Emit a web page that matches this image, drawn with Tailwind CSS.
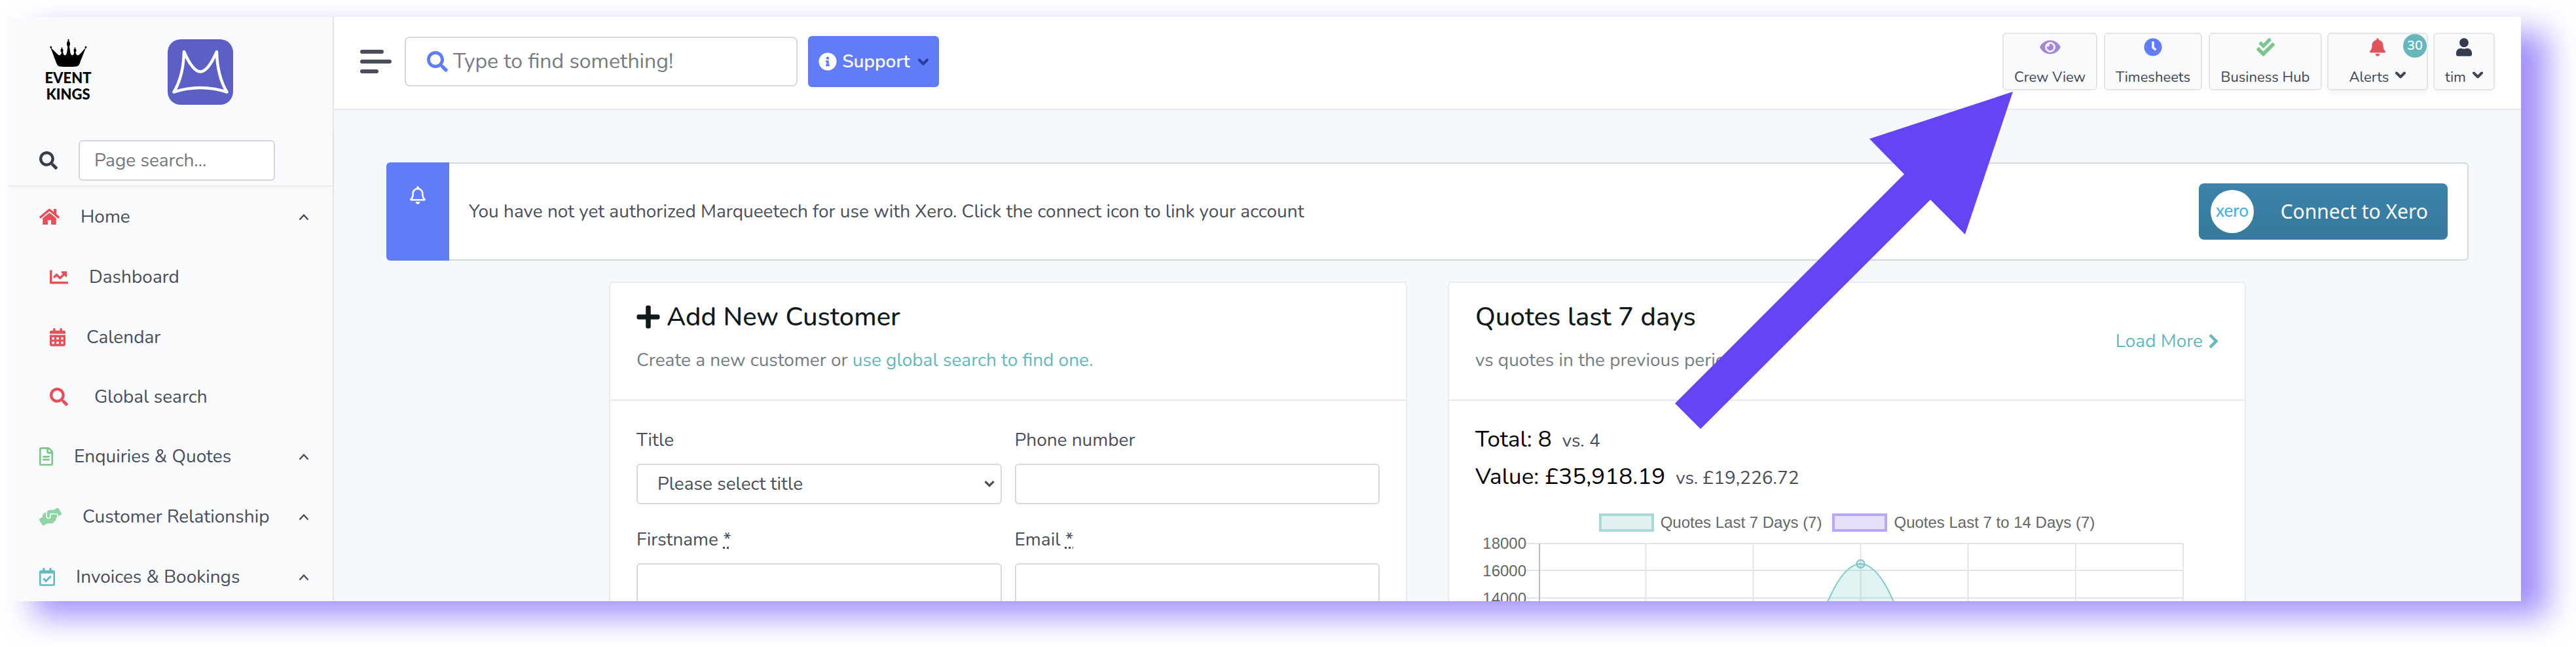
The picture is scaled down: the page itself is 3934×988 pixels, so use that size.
<!DOCTYPE html>
<html lang="en">
<head>
    <meta charset="UTF-8">
    <meta name="viewport" content="width=device-width, initial-scale=1.0">
    <title>Marqueetech - Dashboard</title>
    <script src="https://cdn.jsdelivr.net/npm/@tailwindcss/browser@4"></script>
</head>
<body class="h-screen overflow-hidden bg-white pt-[26px] pr-[84px] pb-[70px] pl-3 font-['Nunito','Lato',sans-serif] text-[28px] leading-10 text-[#4a4f5a]">

    <!-- Icon sprite -->
    <svg class="hidden">
        <symbol id="search" viewBox="0 0 512 512"><path d="M505 442.7L405.3 343c-4.5-4.5-10.6-7-17-7H372c27.6-35.3 44-79.7 44-128C416 93.1 322.9 0 208 0S0 93.1 0 208s93.1 208 208 208c48.3 0 92.7-16.4 128-44v16.3c0 6.4 2.5 12.5 7 17l99.7 99.7c9.4 9.4 24.6 9.4 33.9 0l28.3-28.3c9.4-9.4 9.4-24.6.1-34zM208 336c-70.7 0-128-57.2-128-128 0-70.7 57.2-128 128-128 70.7 0 128 57.2 128 128 0 70.7-57.2 128-128 128z"/></symbol>
        <symbol id="home" viewBox="0 0 576 512"><path d="M280.37 148.26L96 300.11V464a16 16 0 0 0 16 16l112.06-.29a16 16 0 0 0 15.92-16V368a16 16 0 0 1 16-16h64a16 16 0 0 1 16 16v95.64a16 16 0 0 0 16 16.05L464 480a16 16 0 0 0 16-16V300L295.67 148.26a12.19 12.19 0 0 0-15.3 0zM571.6 251.47L488 182.56V44.05a12 12 0 0 0-12-12h-56a12 12 0 0 0-12 12v72.61L318.47 43a48 48 0 0 0-61 0L4.34 251.47a12 12 0 0 0-1.6 16.9l25.5 31A12 12 0 0 0 45.15 301l235.22-193.74a12.19 12.19 0 0 1 15.3 0L530.9 301a12 12 0 0 0 16.9-1.6l25.5-31a12 12 0 0 0-1.7-16.93z"/></symbol>
        <symbol id="chart" viewBox="0 0 512 512"><path d="M496 384H64V80c0-8.84-7.16-16-16-16H16C7.16 64 0 71.16 0 80v336c0 17.67 14.33 32 32 32h464c8.84 0 16-7.16 16-16v-32c0-8.84-7.16-16-16-16zM464 96H345.94c-21.38 0-32.09 25.85-16.97 40.97l32.4 32.4L288 242.75l-73.37-73.37c-12.5-12.5-32.76-12.5-45.25 0l-68.69 68.69c-6.25 6.25-6.25 16.38 0 22.63l22.62 22.62c6.25 6.25 16.38 6.25 22.63 0L192 237.25l73.37 73.37c12.5 12.5 32.76 12.5 45.25 0l96-96 32.4 32.4c15.12 15.12 40.97 4.41 40.97-16.97V112c.01-8.84-7.15-16-15.99-16z"/></symbol>
        <symbol id="calendar" viewBox="0 0 448 512"><path fill-rule="evenodd" d="M0 464c0 26.500 21.500 48 48 48h352c26.500 0 48-21.500 48-48V192H0zM64 256h64v64H64zm128 0h64v64h-64zm128 0h64v64h-64zM64 384h64v64H64zm128 0h64v64h-64zm128 0h64v64h-64z"/><path d="M400 64h-48V16c0-8.800-7.200-16-16-16h-32c-8.800 0-16 7.200-16 16v48H160V16c0-8.800-7.200-16-16-16h-32c-8.800 0-16 7.200-16 16v48H48C21.500 64 0 85.500 0 112v48h448v-48c0-26.500-21.500-48-48-48z"/></symbol>
        <symbol id="file" viewBox="0 0 384 512"><path d="M288 248v28c0 6.600-5.400 12-12 12H108c-6.600 0-12-5.400-12-12v-28c0-6.600 5.400-12 12-12h168c6.600 0 12 5.400 12 12zm-12 72H108c-6.600 0-12 5.400-12 12v28c0 6.600 5.400 12 12 12h168c6.600 0 12-5.400 12-12v-28c0-6.600-5.400-12-12-12zm108-188.100V464c0 26.500-21.500 48-48 48H48c-26.500 0-48-21.500-48-48V48C0 21.500 21.500 0 48 0h204.100C264.800 0 277 5.100 286 14.100L369.900 98c9 8.900 14.100 21.200 14.100 33.900zm-128-80V128h76.100L256 51.900zM336 464V176H232c-13.300 0-24-10.700-24-24V48H48v416h288z"/></symbol>
        <symbol id="hands" viewBox="0 0 640 512"><path d="M488 192H336v56c0 39.700-32.300 72-72 72s-72-32.300-72-72V126.400l-64.900 39C107.800 176.900 96 197.800 96 220.200v47.300l-80 46.200C.7 322.500-4.600 342.100 4.300 357.400l80 138.600c8.800 15.300 28.400 20.500 43.700 11.700L231.400 448H368c35.300 0 64-28.700 64-64h16c17.700 0 32-14.300 32-32v-64h8c13.300 0 24-10.700 24-24v-48c0-13.300-10.700-24-24-24zm147.700-37.400L555.700 16C546.900.7 527.300-4.500 512 4.300L408.600 64H306.400c-12 0-23.700 3.400-33.900 9.700L239 94.600c-9.400 5.800-15 16.100-15 27.100V248c0 22.100 17.900 40 40 40s40-17.900 40-40v-88h184c30.900 0 56 25.100 56 56v28.500l80-46.200c15.300-8.900 20.500-28.400 11.700-43.700z"/></symbol>
        <symbol id="calendar-check" viewBox="0 0 448 512"><path d="M400 64h-48V12c0-6.627-5.373-12-12-12h-40c-6.627 0-12 5.373-12 12v52H160V12c0-6.627-5.373-12-12-12h-40c-6.627 0-12 5.373-12 12v52H48C21.490 64 0 85.490 0 112v352c0 26.510 21.490 48 48 48h352c26.510 0 48-21.490 48-48V112c0-26.510-21.490-48-48-48zm-6 400H54a6 6 0 0 1-6-6V160h352v298a6 6 0 0 1-6 6zm-52.849-200.650L198.842 404.519c-4.705 4.667-12.303 4.637-16.971-.068l-75.091-75.699c-4.667-4.705-4.637-12.303.068-16.971l22.719-22.536c4.705-4.667 12.303-4.637 16.970.069l44.104 44.461 111.072-110.181c4.705-4.667 12.303-4.637 16.971.068l22.536 22.718c4.667 4.705 4.636 12.303-.069 16.970z"/></symbol>
        <symbol id="info" viewBox="0 0 512 512"><path d="M256 8C119.043 8 8 119.083 8 256c0 136.997 111.043 248 248 248s248-111.003 248-248C504 119.083 392.957 8 256 8zm0 110c23.196 0 42 18.804 42 42s-18.804 42-42 42-42-18.804-42-42 18.804-42 42-42zm56 254c0 6.627-5.373 12-12 12h-88c-6.627 0-12-5.373-12-12v-24c0-6.627 5.373-12 12-12h12v-64h-12c-6.627 0-12-5.373-12-12v-24c0-6.627 5.373-12 12-12h64c6.627 0 12 5.373 12 12v100h12c6.627 0 12 5.373 12 12v24z"/></symbol>
        <symbol id="eye" viewBox="0 0 576 512"><path d="M572.52 241.4C518.29 135.59 410.93 64 288 64S57.68 135.64 3.480 241.410a32.350 32.350 0 0 0 0 29.190C57.710 376.410 165.070 448 288 448s230.320-71.640 284.520-177.410a32.350 32.350 0 0 0 0-29.190zM288 400a144 144 0 1 1 144-144 143.930 143.930 0 0 1-144 144zm0-240a95.310 95.310 0 0 0-25.310 3.790 47.850 47.850 0 0 1-66.900 66.900A95.780 95.780 0 1 0 288 160z"/></symbol>
        <symbol id="clock" viewBox="0 0 512 512"><path d="M256 8C119 8 8 119 8 256s111 248 248 248 248-111 248-248S393 8 256 8zm92.490 313l-20 25a16 16 0 0 1-22.490 2.500l-67-49.720a40 40 0 0 1-15-31.230V112a16 16 0 0 1 16-16h32a16 16 0 0 1 16 16v144l58 42.500a16 16 0 0 1 2.490 22.500z"/></symbol>
        <symbol id="check-double" viewBox="0 0 512 512"><path d="M505 174.800l-39.600-39.600c-9.400-9.400-24.600-9.400-33.900 0L192 374.700 80.600 263.200c-9.400-9.400-24.600-9.400-33.900 0L7 302.900c-9.400 9.400-9.400 24.600 0 34L175 505c9.400 9.400 24.600 9.400 33.900 0l296-296.200c9.400-9.500 9.400-24.700.1-34zm-324.300 106c6.200 6.300 16.400 6.300 22.600 0l208-208.200c6.200-6.300 6.200-16.400 0-22.600L366.100 4.700c-6.200-6.300-16.400-6.300-22.600 0L192 156.200l-55.400-55.500c-6.200-6.300-16.400-6.300-22.600 0L68.700 146c-6.200 6.300-6.200 16.400 0 22.600l112 112.200z"/></symbol>
        <symbol id="bell" viewBox="0 0 448 512"><path d="M224 512c35.320 0 63.970-28.650 63.970-64H160.030c0 35.350 28.650 64 63.970 64zm215.390-149.710c-19.320-20.760-55.470-51.990-55.470-154.290 0-77.700-54.480-139.900-127.940-155.160V32c0-17.670-14.320-32-31.980-32s-31.980 14.330-31.980 32v20.840C118.560 68.100 64.080 130.300 64.080 208c0 102.300-36.150 133.530-55.470 154.290-6 6.450-8.660 14.160-8.610 21.710.11 16.400 12.980 32 32.100 32h383.800c19.120 0 32-15.600 32.100-32 .05-7.550-2.610-15.270-8.610-21.710z"/></symbol>
        <symbol id="bell-outline" viewBox="0 0 448 512"><path d="M439.390 362.290c-19.320-20.760-55.470-51.990-55.470-154.290 0-77.700-54.480-139.900-127.940-155.160V32c0-17.670-14.320-32-31.980-32s-31.980 14.330-31.980 32v20.840C118.560 68.100 64.080 130.300 64.080 208c0 102.300-36.150 133.530-55.470 154.290-6 6.450-8.660 14.160-8.610 21.710.11 16.400 12.980 32 32.100 32h383.800c19.120 0 32-15.600 32.100-32 .05-7.550-2.610-15.270-8.610-21.710zM67.530 368c21.220-27.970 44.420-74.330 44.530-159.420 0-.2-.06-.38-.06-.58 0-61.860 50.140-112 112-112s112 50.140 112 112c0 .2-.06.38-.06.58.11 85.100 23.310 131.460 44.530 159.420H67.530zM224 512c35.320 0 63.970-28.650 63.970-64H160.030c0 35.350 28.650 64 63.970 64z"/></symbol>
        <symbol id="user" viewBox="0 0 448 512"><path d="M224 256c70.700 0 128-57.300 128-128S294.700 0 224 0 96 57.300 96 128s57.300 128 128 128zm89.600 32h-16.700c-22.200 10.200-46.900 16-72.900 16s-50.600-5.800-72.900-16h-16.700C60.200 288 0 348.200 0 422.400V464c0 26.500 21.500 48 48 48h352c26.500 0 48-21.500 48-48v-41.600c0-74.200-60.200-134.400-134.400-134.400z"/></symbol>
        <symbol id="plus" viewBox="0 0 448 512"><path d="M416 208H272V64c0-17.670-14.330-32-32-32h-32c-17.670 0-32 14.330-32 32v144H32c-17.670 0-32 14.330-32 32v32c0 17.670 14.330 32 32 32h144v144c0 17.670 14.330 32 32 32h32c17.670 0 32-14.330 32-32V304h144c17.670 0 32-14.330 32-32v-32c0-17.670-14.330-32-32-32z"/></symbol>
        <symbol id="up" viewBox="0 0 16 11"><path d="M1.500 9.500L8 2.500l6.500 7" fill="none" stroke="currentColor" stroke-width="2.500"/></symbol>
        <symbol id="down" viewBox="0 0 16 11"><path d="M2 2.500l6 6 6-6" fill="none" stroke="currentColor" stroke-width="4" stroke-linecap="round" stroke-linejoin="round"/></symbol>
    </svg>

    <div class="flex h-full overflow-hidden bg-[#f5f9fc] shadow-[40px_23px_45px_rgba(102,68,245,0.6)]">

        <!-- Sidebar -->
        <aside class="w-[498px] shrink-0 border-r-2 border-[#e1e5e8] bg-[#f8fafb]">
            <div class="flex h-[172px] items-start gap-[116px] border-b border-[#f3f5f6] pt-[34px] pl-14">
                <a href="#" class="flex w-[72px] flex-col items-center text-black">
                    <svg class="h-[42px] w-[57px]" viewBox="0 0 57 42" fill="currentColor">
                        <path d="M1 12l10 10c3 3.500 5 3 6.500 0l1-3h1.500l1 4c2 2.500 4 1.500 5-2l1.500-10h2.500l1.500 10c1 3.500 3 4.500 5 2l1-4h1.500l1 3c1.500 3 3.500 3.500 6.500 0l9-10-8 20c-2 6-3 9-7 9.500-8 1-17 1-25 0-4-.5-5-4-7-9.500z"/>
                        <ellipse cx="28.500" cy="7" rx="2.500" ry="4"/><path d="M27.500 0h2v14h-2z"/>
                        <ellipse cx="18.500" cy="17" rx="2" ry="3"/><ellipse cx="38.500" cy="17" rx="2" ry="3"/>
                        <path d="M18 12h1v10h-1zM38 12h1v10h-1z"/>
                        <circle cx="1.800" cy="12" r="1.500"/><circle cx="55" cy="12" r="1.500"/>
                    </svg>
                    <span class="mt-1 text-center font-['Lato'] text-[22px] leading-[25px] font-black">EVENT<br>KINGS</span>
                </a>
                <a href="#" aria-label="Marqueetech">
                    <svg class="size-[100px]" viewBox="0 0 100 100">
                        <rect width="100" height="100" rx="20" fill="#5c60c5"/>
                        <path d="M25 19C33 37 42 49.500 50 49.500S67 37 75 19C75.500 44 80 63 90.500 80.500 64 72 36 72 9.500 80.500 20 63 24.500 44 25 19z" fill="none" stroke="#fff" stroke-width="4.500" stroke-linejoin="round"/>
                    </svg>
                </a>
            </div>
            <div class="flex h-[87px] items-center gap-8 border-b-2 border-[#eceff0] pt-2 pl-12 shadow-[0_2px_4px_rgba(0,0,0,0.03)]">
                <svg class="size-7 fill-[#343c4d]"><use href="#search"/></svg>
                <input type="text" aria-label="Page search" placeholder="Page search..." class="h-[62px] w-[300px] rounded-md border-2 border-[#d3d6db] bg-white px-[22px] placeholder:text-[#72787d]">
            </div>
            <nav class="text-[#4a4e5c]">
                <button class="flex h-[92px] w-full items-center gap-8 pr-9 pl-12 text-left">
                    <svg class="h-7 w-[31px] fill-[#e3515a]"><use href="#home"/></svg>
                    <span class="flex-1">Home</span>
                    <svg class="h-[11px] w-4"><use href="#up"/></svg>
                </button>
                <a href="#" class="flex h-[92px] items-center gap-8 pl-16">
                    <svg class="size-7 fill-[#e3515a]"><use href="#chart"/></svg>Dashboard
                </a>
                <a href="#" class="flex h-[92px] items-center gap-8 pl-16">
                    <svg class="h-7 w-6 fill-[#e3515a]"><use href="#calendar"/></svg>Calendar
                </a>
                <a href="#" class="flex h-[90px] items-center gap-10 pl-16">
                    <svg class="size-7 fill-[#e3515a]"><use href="#search"/></svg>Global search
                </a>
                <button class="flex h-[92px] w-full items-center gap-8 pr-9 pl-12 text-left">
                    <svg class="h-7 w-[21px] fill-[#7cc58b]"><use href="#file"/></svg>
                    <span class="flex-1">Enquiries &amp; Quotes</span>
                    <svg class="h-[11px] w-4"><use href="#up"/></svg>
                </button>
                <button class="flex h-[92px] w-full items-center gap-8 pr-9 pl-12 text-left">
                    <svg class="h-7 w-[34px] fill-[#8ed4a5]"><use href="#hands"/></svg>
                    <span class="flex-1">Customer Relationship</span>
                    <svg class="h-[11px] w-4"><use href="#up"/></svg>
                </button>
                <button class="flex h-[92px] w-full items-center gap-8 pr-9 pl-12 text-left">
                    <svg class="h-7 w-6 fill-[#66b9c4]"><use href="#calendar-check"/></svg>
                    <span class="flex-1">Invoices &amp; Bookings</span>
                    <svg class="h-[11px] w-4"><use href="#up"/></svg>
                </button>
            </nav>
        </aside>

        <div class="min-w-0 flex-1">
            <!-- Top bar -->
            <header class="flex h-[142px] items-center border-b-2 border-[#e5e9ef] bg-white pr-10 pb-1 pl-10">
                <button aria-label="Toggle menu" class="mr-5 flex w-12 flex-col gap-[9px]">
                    <span class="h-1.5 w-9 rounded-sm bg-[#4a4e5a]"></span>
                    <span class="h-1.5 w-12 rounded-sm bg-[#4a4e5a]"></span>
                    <span class="h-1.5 w-7 rounded-sm bg-[#4a4e5a]"></span>
                </button>
                <label class="mr-4 flex h-[76px] w-[600px] items-center gap-2 rounded-lg border-2 border-[#d6d8da] px-8">
                    <svg class="size-8 shrink-0 fill-[#607cf6]"><use href="#search"/></svg>
                    <input type="text" aria-label="Search" placeholder="Type to find something!" class="w-full text-[32px] outline-none placeholder:text-[#767c80]">
                </label>
                <button class="flex h-[78px] w-[200px] items-center justify-center gap-2 rounded-md bg-[#607cf6] font-semibold text-white">
                    <svg class="size-7 fill-white"><use href="#info"/></svg>Support
                    <svg class="ml-1 h-[11px] w-4 text-[#2b3d9c]"><use href="#down"/></svg>
                </button>

                <div class="ml-auto flex gap-2 text-[22px] leading-9 text-[#414656]">
                    <div class="relative">
                        <a href="#" class="flex h-[88px] w-[145px] flex-col items-center justify-between rounded-md border-2 border-[#e3e6e9] bg-[#f8fafb] pt-1.5">
                            <svg class="h-7 w-8 fill-[#a587d8]"><use href="#eye"/></svg>Crew View
                        </a>
                        <!-- Arrow pointing at Crew View -->
                        <svg class="pointer-events-none absolute top-[90px] right-[129px] z-10 h-[515px] w-[516px] fill-[#6644f3]" viewBox="0 0 516 515">
                            <path d="M516 0L443 218 390 165 39 515 0 476 350 126 297 72z"/>
                        </svg>
                    </div>
                    <a href="#" class="ml-0.5 flex h-[88px] w-[150px] flex-col items-center justify-between rounded-md border-2 border-[#e3e6e9] bg-[#f8fafb] pt-1.5">
                        <svg class="size-7 fill-[#607cf6]"><use href="#clock"/></svg>Timesheets
                    </a>
                    <a href="#" class="ml-0.5 flex h-[88px] w-[173px] flex-col items-center justify-between rounded-md border-2 border-[#e3e6e9] bg-[#f8fafb] pt-1.5">
                        <svg class="size-7 fill-[#7cc58b]"><use href="#check-double"/></svg>Business Hub
                    </a>
                    <button class="relative flex h-[88px] w-[154px] flex-col items-center justify-between rounded-md border-2 border-[#e3e6e9] bg-[#f8fafb] pt-1.5 shadow-[0_4px_8px_rgba(0,0,0,0.05)]">
                        <svg class="h-7 w-6 fill-[#e3515a]"><use href="#bell"/></svg>
                        <span class="flex items-center gap-2.5">Alerts <svg class="mb-2 h-[11px] w-4"><use href="#down"/></svg></span>
                        <span class="absolute top-0 right-0 flex size-9 items-center justify-center rounded-full bg-[#66b7bb] text-xl font-semibold text-white">30</span>
                    </button>
                    <button class="flex h-[88px] w-[94px] flex-col items-center justify-between rounded-md border-2 border-[#e3e6e9] bg-[#f8fafb] pt-1.5 shadow-[0_4px_8px_rgba(0,0,0,0.03)]">
                        <svg class="h-7 w-6 fill-[#343c4d]"><use href="#user"/></svg>
                        <span class="flex items-center gap-2.5">tim <svg class="mb-2 h-[11px] w-4"><use href="#down"/></svg></span>
                    </button>
                </div>
            </header>

            <main class="px-20 pt-20">
                <!-- Xero notice -->
                <div class="flex h-[150px]">
                    <div class="flex w-24 shrink-0 justify-center rounded-l-md bg-[#607cf6] pt-9">
                        <svg class="h-7 w-6 fill-white"><use href="#bell-outline"/></svg>
                    </div>
                    <div class="flex flex-1 items-center justify-between rounded-r-md border-2 border-l-0 border-[#d3d8db] bg-white pr-[30px] pl-[30px]">
                        <p>You have not yet authorized Marqueetech for use with Xero. Click the connect icon to link your account</p>
                        <a href="#" class="flex h-[86px] w-[380px] items-center justify-between rounded-lg bg-linear-to-b from-[#3c82a9] to-[#37799c] pr-[30px] pl-[18px] font-['Noto_Sans'] text-[30px] text-white">
                            <span class="flex size-[66px] items-center justify-center rounded-full bg-white pb-1 font-['Lato'] text-[26px] text-[#3fafe4]">xero</span>
                            Connect to Xero
                        </a>
                    </div>
                </div>

                <div class="mx-auto mt-8 grid max-w-[2500px] grid-cols-2 gap-[62px]">
                    <!-- New customer form -->
                    <section class="rounded-md border-2 border-[#e8ecf0] bg-white">
                        <div class="border-b-2 border-[#e8e8f2] px-10 pt-7 pb-10">
                            <h2 class="flex items-center gap-2.5 text-[40px] leading-[48px] font-medium text-[#12191b]">
                                <svg class="h-10 w-9 fill-[#12191b]"><use href="#plus"/></svg>Add New Customer
                            </h2>
                            <p class="mt-[22px] text-[#777d82]">Create a new customer or <a href="#" class="text-[#66b7bb]">use global search to find one.</a></p>
                        </div>
                        <form class="grid grid-cols-2 gap-x-5 gap-y-[34px] px-10 pt-10">
                            <div>
                                <label for="title">Title</label>
                                <div class="relative mt-4">
                                    <select id="title" class="h-[62px] w-full appearance-none rounded-md border-2 border-[#d6d8da] bg-white px-[30px]">
                                        <option>Please select title</option>
                                    </select>
                                    <svg class="pointer-events-none absolute top-[25px] right-2.5 h-3 w-[18px]" viewBox="0 0 16 11"><path d="M2 2l6 6 6-6" fill="none" stroke="currentColor" stroke-width="3"/></svg>
                                </div>
                            </div>
                            <div>
                                <label for="phone">Phone number</label>
                                <input id="phone" type="tel" class="mt-4 block h-[62px] w-full rounded-md border-2 border-[#d6d8da] px-[30px]">
                            </div>
                            <div>
                                <label for="firstname">Firstname <abbr title="required">*</abbr></label>
                                <input id="firstname" type="text" class="mt-4 block h-[62px] w-full rounded-md border-2 border-[#d6d8da] px-[30px]">
                            </div>
                            <div>
                                <label for="email">Email <abbr title="required">*</abbr></label>
                                <input id="email" type="email" class="mt-4 block h-[62px] w-full rounded-md border-2 border-[#d6d8da] px-[30px]">
                            </div>
                        </form>
                    </section>

                    <!-- Quotes chart -->
                    <section class="rounded-md border-2 border-[#e8ecf0] bg-white">
                        <div class="flex items-center justify-between border-b-2 border-[#e8e8f2] px-10 pt-7 pb-10">
                            <div>
                                <h2 class="text-[40px] leading-[48px] font-medium text-[#12191b]">Quotes last 7 days</h2>
                                <p class="mt-[22px] text-[#777d82]">vs quotes in the previous period</p>
                            </div>
                            <a href="#" class="mt-3 flex items-center gap-2 text-[#66b7bb]">Load More
                                <svg class="h-6 w-4" viewBox="0 0 16 24"><path d="M3 2.500l9.500 9.500L3 21.500" fill="none" stroke="currentColor" stroke-width="4.500"/></svg>
                            </a>
                        </div>
                        <div class="px-10 pt-[30px]">
                            <p class="flex h-[57px] items-baseline gap-4 leading-[57px]"><span class="text-[35px] text-black">Total: 8</span>vs. 4</p>
                            <p class="flex h-[57px] items-baseline gap-4 leading-[57px]"><span class="text-[35px] text-black">Value: £35,918.19</span>vs. £19,226.72</p>
                            <div class="mt-7 flex justify-center gap-4 font-['Liberation_Sans'] text-2xl leading-7 text-[#666]">
                                <span class="flex gap-2.5"><i class="h-7 w-[84px] border-4 border-[#a9d8d8] bg-[#e1f1f1]"></i>Quotes Last 7 Days (7)</span>
                                <span class="flex gap-2.5"><i class="h-7 w-[84px] border-4 border-[#bba6f6] bg-[#e7e0fa]"></i>Quotes Last 7 to 14 Days (7)</span>
                            </div>
                            <svg class="mt-1.5 w-full" viewBox="0 0 1134 440">
                                <path d="M78 12h1002M78 53h1002M78 95h1002M260 12v374M424 12v374M588 12v374M752 12v374M916 12v374M1080 12v374" stroke="#e5e5e5" stroke-width="2"/>
                                <path d="M98 12v374" stroke="#bbb" stroke-width="2"/>
                                <path d="M424 386C489 317 523 43 588 43s99 274 164 343z" fill="#4bc0c0" fill-opacity=".17"/>
                                <path d="M424 386C489 317 523 43 588 43s99 274 164 343" fill="none" stroke="#86c9cb" stroke-width="2"/>
                                <circle cx="588" cy="43" r="6" fill="#4bc0c0" fill-opacity=".2" stroke="#7cc6c9" stroke-width="2"/>
                                <g class="fill-[#666] font-['Liberation_Sans'] text-2xl" text-anchor="end">
                                    <text x="78" y="20">18000</text>
                                    <text x="78" y="62">16000</text>
                                    <text x="78" y="104">14000</text>
                                </g>
                            </svg>
                        </div>
                    </section>
                </div>
            </main>
        </div>
    </div>
</body>
</html>
